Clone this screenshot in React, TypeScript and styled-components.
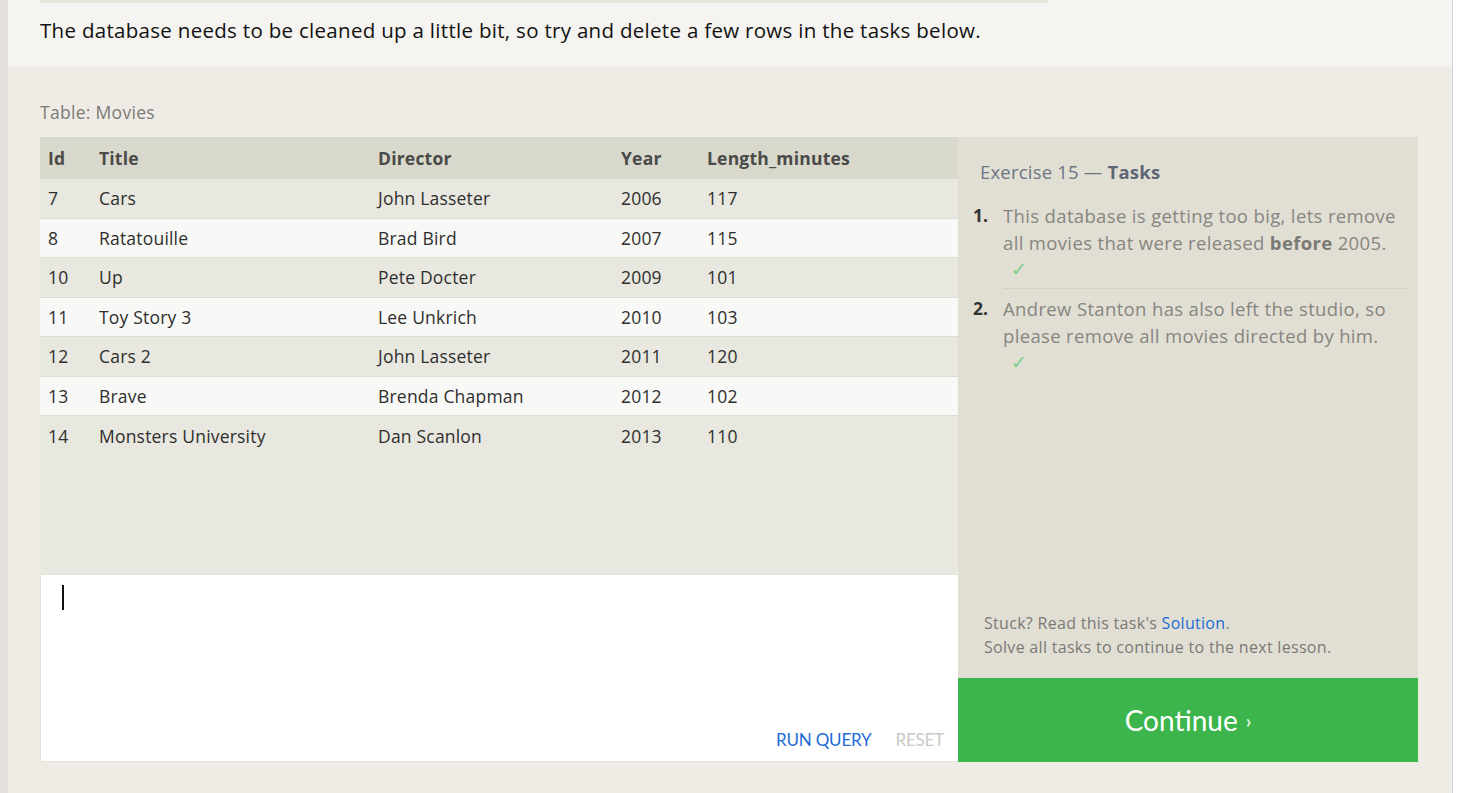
import React from "react";
import styled, { createGlobalStyle } from "styled-components";

const Global = createGlobalStyle`
  html, body { margin: 0; padding: 0; background: #ffffff; }
  body { font-family: "Open Sans", Lato, sans-serif; }
  * { box-sizing: border-box; }
`;

const Frame = styled.div`
  width: 1453px;
  height: 793px;
  border-left: 8px solid #e3e0dc;
  border-right: 1px solid #cbd2dd;
  background: #f5f4f0;
  display: flex;
  flex-direction: column;
  overflow: hidden;
`;

const Intro = styled.section`
  padding: 0 32px;
  height: 66px;
  display: flex;
  flex-direction: column;
`;

const TopEdge = styled.div`
  width: 1008px;
  height: 3px;
  background: #e8e7de;
`;

const IntroText = styled.p`
  margin: 14px 0 0;
  font-size: 20.5px;
  line-height: 26px;
  letter-spacing: 0.3px;
  color: #111;
  white-space: nowrap;
`;

const Workspace = styled.section`
  flex: 1;
  background: #efece5;
  border-top-left-radius: 3px;
  padding: 34px 33px 0 32px;
`;

const TableLabel = styled.div`
  font-size: 17.5px;
  line-height: 24px;
  letter-spacing: 0.3px;
  color: #7a7a76;
  margin-bottom: 13px;
`;

const Grid = styled.div`
  display: grid;
  grid-template-columns: 918px 460px;
  grid-template-rows: 437px 104px 84px;
`;

const TableArea = styled.div`
  background: #e8e7e0;
  grid-column: 1;
  grid-row: 1;
`;

const Row = styled.div<{ $head?: boolean; $alt?: boolean }>`
  display: grid;
  grid-template-columns: 51px 279px 243px 86px 1fr;
  align-items: center;
  height: ${(p) => (p.$head ? "42px" : "39.5px")};
  background: ${(p) => (p.$head ? "#d9d8cc" : p.$alt ? "#f8f8f7" : "#e8e7e0")};
  border-bottom: ${(p) => (p.$head ? "none" : "1px solid #dcdbd4")};
  &:last-child { border-bottom: none; }
  font-size: 17.5px;
  letter-spacing: 0.2px;
  font-weight: ${(p) => (p.$head ? 700 : 400)};
  color: ${(p) => (p.$head ? "#4a4a48" : "#2f2f2d")};
`;

const Cell = styled.div`
  padding-left: 8px;
  white-space: nowrap;
`;

const Editor = styled.div`
  grid-column: 1;
  grid-row: 2 / span 2;
  background: #ffffff;
  border: 1px solid #e3e2da;
  border-right: none;
  display: flex;
  flex-direction: column;
  justify-content: space-between;
  padding: 10px 14px 10px 21px;
`;

const Caret = styled.div`
  width: 2px;
  height: 25px;
  background: #111;
`;

const EditorActions = styled.div`
  display: flex;
  justify-content: flex-end;
  gap: 24px;
  padding-bottom: 1px;
`;

const ActionButton = styled.span<{ $muted?: boolean }>`
  font-size: 17px;
  letter-spacing: -0.2px;
  color: ${(p) => (p.$muted ? "#c9c9c6" : "#1d6bd6")};
  font-family: Lato, sans-serif;
`;

const TaskPanel = styled.aside`
  grid-column: 2;
  grid-row: 1 / span 2;
  background: #e1dfd4;
  padding: 22px 10px 19px 15px;
  display: flex;
  flex-direction: column;
`;

const TaskTitle = styled.h2`
  margin: 0 0 17px 7px;
  font-size: 18.5px;
  line-height: 26px;
  letter-spacing: 0.2px;
  font-weight: 400;
  color: #6d7585;
  b { font-weight: 700; color: #5e6676; }
`;

const TaskList = styled.ol`
  margin: 0;
  padding: 0;
  list-style: none;
  flex: 1;
`;

const TaskItem = styled.li`
  display: flex;
  gap: 13px;
  padding-bottom: 6px;
`;

const TaskNum = styled.span`
  width: 17px;
  font-size: 17.5px;
  line-height: 27px;
  font-weight: 700;
  color: #333;
`;

const TaskBody = styled.div<{ $sep?: boolean }>`
  flex: 1;
  padding-bottom: 5px;
  border-bottom: ${(p) => (p.$sep ? "1px solid #d3d1c6" : "none")};
`;

const TaskText = styled.p`
  margin: 0;
  font-size: 18.5px;
  line-height: 27px;
  letter-spacing: 0.35px;
  color: #878580;
  b { font-weight: 700; color: #7b7974; }
`;

const Check = styled.div`
  color: #7fcf8b;
  font-size: 19px;
  line-height: 27px;
  padding-left: 8px;
`;

const Help = styled.div`
  padding-left: 11px;
  font-size: 16px;
  line-height: 24px;
  letter-spacing: 0.3px;
  color: #7b7976;
  a { color: #1d6bd6; text-decoration: none; }
`;

const ContinueButton = styled.button`
  grid-column: 2;
  grid-row: 3;
  border: none;
  background: #3cb64c;
  color: #ffffff;
  font-family: Lato, "Open Sans", sans-serif;
  font-size: 28px;
  display: flex;
  align-items: center;
  justify-content: center;
  gap: 8px;
  padding-bottom: 2px;
`;

const Chevron = styled.span`
  font-size: 20px;
`;

const movies = [
  [7, "Cars", "John Lasseter", 2006, 117],
  [8, "Ratatouille", "Brad Bird", 2007, 115],
  [10, "Up", "Pete Docter", 2009, 101],
  [11, "Toy Story 3", "Lee Unkrich", 2010, 103],
  [12, "Cars 2", "John Lasseter", 2011, 120],
  [13, "Brave", "Brenda Chapman", 2012, 102],
  [14, "Monsters University", "Dan Scanlon", 2013, 110],
];

export default function App() {
  return (
    <>
      <Global />
      <Frame>
        <Intro>
          <TopEdge />
          <IntroText>
            The database needs to be cleaned up a little bit, so try and delete a few rows in the tasks below.
          </IntroText>
        </Intro>
        <Workspace>
          <TableLabel>Table: Movies</TableLabel>
          <Grid>
            <TableArea>
              <Row $head>
                <Cell>Id</Cell>
                <Cell>Title</Cell>
                <Cell>Director</Cell>
                <Cell>Year</Cell>
                <Cell>Length_minutes</Cell>
              </Row>
              {movies.map((m, i) => (
                <Row key={m[0] as number} $alt={i % 2 === 1}>
                  {m.map((v, j) => (
                    <Cell key={j}>{v}</Cell>
                  ))}
                </Row>
              ))}
            </TableArea>
            <Editor>
              <Caret />
              <EditorActions>
                <ActionButton>RUN QUERY</ActionButton>
                <ActionButton $muted>RESET</ActionButton>
              </EditorActions>
            </Editor>
            <TaskPanel>
              <TaskTitle>
                Exercise 15 — <b>Tasks</b>
              </TaskTitle>
              <TaskList>
                <TaskItem>
                  <TaskNum>1.</TaskNum>
                  <TaskBody $sep>
                    <TaskText>
                      This database is getting too big, lets remove all movies that were released <b>before</b> 2005.
                    </TaskText>
                    <Check>✓</Check>
                  </TaskBody>
                </TaskItem>
                <TaskItem>
                  <TaskNum>2.</TaskNum>
                  <TaskBody>
                    <TaskText>
                      Andrew Stanton has also left the studio, so please remove all movies directed by him.
                    </TaskText>
                    <Check>✓</Check>
                  </TaskBody>
                </TaskItem>
              </TaskList>
              <Help>
                Stuck? Read this task's <a href="#">Solution</a>.
                <br />
                Solve all tasks to continue to the next lesson.
              </Help>
            </TaskPanel>
            <ContinueButton>
              Continue <Chevron>›</Chevron>
            </ContinueButton>
          </Grid>
        </Workspace>
      </Frame>
    </>
  );
}
